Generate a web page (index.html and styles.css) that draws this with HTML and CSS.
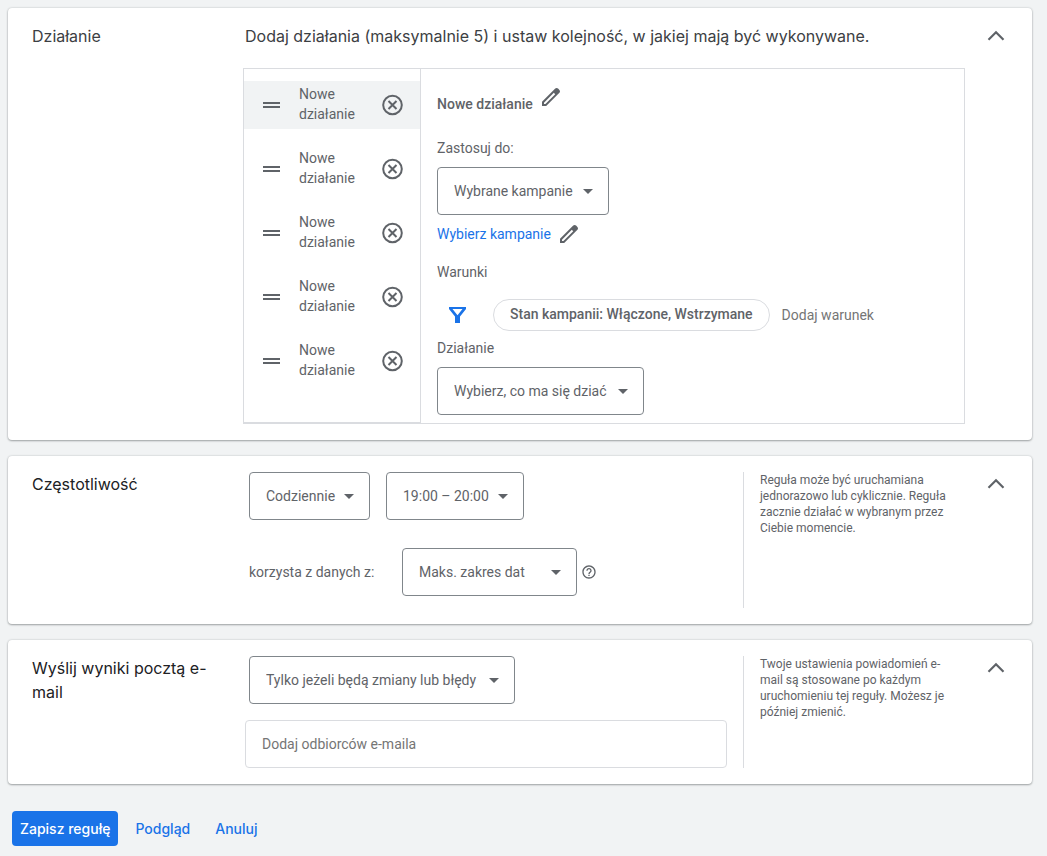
FILE: index.html
```html
<!DOCTYPE html>
<html lang="pl">
<head>
<meta charset="utf-8">
<meta name="viewport" content="width=device-width, initial-scale=1">
<title>Reguła automatyczna</title>
<link rel="stylesheet" href="styles.css">
</head>
<body>
<svg class="sprite" aria-hidden="true">
  <symbol id="chevron" viewBox="0 0 24 24"><path d="M4.500 15.800L12 8.300l7.500 7.500" fill="none" stroke="currentColor" stroke-width="2.200"/></symbol>
  <symbol id="handle" viewBox="0 0 24 24"><path d="M4 9h17v2H4zM4 13h17v2H4z" fill="currentColor"/></symbol>
  <symbol id="remove" viewBox="0 0 24 24"><circle cx="11.500" cy="12" r="9.300" fill="none" stroke="currentColor" stroke-width="2"/><path d="M7.500 8l8 8M15.500 8l-8 8" stroke="currentColor" stroke-width="2"/></symbol>
  <symbol id="pencil" viewBox="0 0 24 24"><path fill-rule="evenodd" d="M20.410 4.940l-1.350-1.350c-.780-.780-2.050-.780-2.830 0L3 16.820V21h4.180L20.410 7.770c.790-.780.790-2.050 0-2.830zM6.410 19.060L5 19v-1.360l9.820-9.820 1.410 1.410z" fill="currentColor"/></symbol>
  <symbol id="filter" viewBox="0 0 24 24"><path fill-rule="evenodd" d="M4 4h17v2l-6 7.500V20h-5v-6.500L4 6zM7.500 6l5 6.200L17.500 6z" fill="currentColor"/></symbol>
  <symbol id="arrow" viewBox="0 0 10 5"><path d="M0 0h10L5 5z" fill="currentColor"/></symbol>
  <symbol id="help" viewBox="0 0 24 24"><path d="M11 18h2v-2h-2v2zm1-16C6.480 2 2 6.480 2 12s4.480 10 10 10 10-4.480 10-10S17.520 2 12 2zm0 18c-4.410 0-8-3.590-8-8s3.590-8 8-8 8 3.590 8 8-3.590 8-8 8zm0-14c-2.210 0-4 1.790-4 4h2c0-1.100.900-2 2-2s2 .900 2 2c0 2-3 1.750-3 5h2c0-2.250 3-2.500 3-5 0-2.210-1.790-4-4-4z" fill="currentColor"/></symbol>
</svg>
<form class="page">
  <section class="card">
    <h2 class="card-title soft">Działanie</h2>
    <div class="card-body">
      <h3 class="heading">Dodaj działania (maksymalnie 5) i ustaw kolejność, w jakiej mają być wykonywane.</h3>
      <div class="editor">
        <ul class="steps">
          <li class="step active"><svg class="icon"><use href="#handle"/></svg><span class="step-name">Nowe działanie</span><button type="button" class="icon-button" aria-label="Usuń działanie 1"><svg class="icon"><use href="#remove"/></svg></button></li>
          <li class="step"><svg class="icon"><use href="#handle"/></svg><span class="step-name">Nowe działanie</span><button type="button" class="icon-button" aria-label="Usuń działanie 2"><svg class="icon"><use href="#remove"/></svg></button></li>
          <li class="step"><svg class="icon"><use href="#handle"/></svg><span class="step-name">Nowe działanie</span><button type="button" class="icon-button" aria-label="Usuń działanie 3"><svg class="icon"><use href="#remove"/></svg></button></li>
          <li class="step"><svg class="icon"><use href="#handle"/></svg><span class="step-name">Nowe działanie</span><button type="button" class="icon-button" aria-label="Usuń działanie 4"><svg class="icon"><use href="#remove"/></svg></button></li>
          <li class="step"><svg class="icon"><use href="#handle"/></svg><span class="step-name">Nowe działanie</span><button type="button" class="icon-button" aria-label="Usuń działanie 5"><svg class="icon"><use href="#remove"/></svg></button></li>
        </ul>
        <div class="details">
          <div class="name-row"><strong class="name">Nowe działanie</strong><button type="button" class="icon-button" aria-label="Zmień nazwę"><svg class="icon"><use href="#pencil"/></svg></button></div>
          <label class="label" for="scope">Zastosuj do:</label>
          <div class="select w-scope"><select id="scope"><option>Wybrane kampanie</option></select><svg class="arrow"><use href="#arrow"/></svg></div>
          <div class="link-row"><a class="link" href="#kampanie">Wybierz kampanie</a><button type="button" class="icon-button" aria-label="Edytuj kampanie"><svg class="icon"><use href="#pencil"/></svg></button></div>
          <p class="label">Warunki</p>
          <div class="filters">
            <svg class="icon filter"><use href="#filter"/></svg>
            <button type="button" class="chip">Stan kampanii: Włączone, Wstrzymane</button>
            <input class="add" type="text" placeholder="Dodaj warunek" aria-label="Dodaj warunek">
          </div>
          <label class="label" for="action">Działanie</label>
          <div class="select w-action"><select id="action"><option>Wybierz, co ma się dziać</option></select><svg class="arrow"><use href="#arrow"/></svg></div>
        </div>
      </div>
    </div>
    <button type="button" class="icon-button toggle" aria-label="Zwiń"><svg class="icon"><use href="#chevron"/></svg></button>
  </section>

  <section class="card">
    <h2 class="card-title">Częstotliwość</h2>
    <div class="card-body split">
      <div class="fields">
        <div class="row">
          <div class="select w-freq"><select aria-label="Częstotliwość"><option>Codziennie</option></select><svg class="arrow"><use href="#arrow"/></svg></div>
          <div class="select w-hours"><select aria-label="Godziny"><option>19:00 – 20:00</option></select><svg class="arrow"><use href="#arrow"/></svg></div>
        </div>
        <div class="row range">
          <label class="range-label" for="range">korzysta z danych z:</label>
          <div class="select w-range"><select id="range"><option>Maks. zakres dat</option></select><svg class="arrow"><use href="#arrow"/></svg></div>
          <button type="button" class="icon-button" aria-label="Pomoc"><svg class="icon-small"><use href="#help"/></svg></button>
        </div>
      </div>
      <p class="help">Reguła może być uruchamiana jednorazowo lub cyklicznie. Reguła zacznie działać w wybranym przez Ciebie momencie.</p>
    </div>
    <button type="button" class="icon-button toggle" aria-label="Zwiń"><svg class="icon"><use href="#chevron"/></svg></button>
  </section>

  <section class="card">
    <h2 class="card-title">Wyślij wyniki pocztą e-mail</h2>
    <div class="card-body split">
      <div class="fields">
        <div class="row">
          <div class="select w-notify"><select aria-label="Kiedy wysyłać"><option>Tylko jeżeli będą zmiany lub błędy</option></select><svg class="arrow"><use href="#arrow"/></svg></div>
        </div>
        <input class="email" type="text" placeholder="Dodaj odbiorców e-maila" aria-label="Dodaj odbiorców e-maila">
      </div>
      <p class="help">Twoje ustawienia powiadomień e-mail są stosowane po każdym uruchomieniu tej reguły. Możesz je później zmienić.</p>
    </div>
    <button type="button" class="icon-button toggle" aria-label="Zwiń"><svg class="icon"><use href="#chevron"/></svg></button>
  </section>

  <footer class="actions">
    <button type="button" class="button primary">Zapisz regułę</button>
    <button type="button" class="button">Podgląd</button>
    <button type="button" class="button">Anuluj</button>
  </footer>
</form>
</body>
</html>
```
FILE: styles.css
```css
* { box-sizing: border-box; }

body {
  margin: 0;
  background: #f1f3f4;
  color: #5f6368;
  font: 14px/20px Roboto, sans-serif;
}

h2, h3, p, ul { margin: 0; padding: 0; list-style: none; }

button, input, select { font: inherit; color: inherit; }

.sprite { display: none; }

.page {
  display: flex;
  flex-direction: column;
  gap: 16px;
  padding: 8px 15px 8px 8px;
}

.card {
  display: grid;
  grid-template-columns: 180px minmax(0, 1fr) 24px;
  padding: 16px 24px;
  background: #fff;
  border-radius: 4px;
  box-shadow: 0 1px 2px rgba(60, 64, 67, .4), 0 0 2px rgba(60, 64, 67, .25);
}

.card-title, .heading {
  font: 400 16px/24px Inter, sans-serif;
  color: #202124;
}

.card-title.soft, .heading { color: #3c4043; }

.card-body { margin: 0 19px 0 31px; }

.heading { padding-left: 2px; }

.icon { display: block; flex: none; width: 24px; height: 24px; }
.icon-small { display: block; width: 16px; height: 16px; }

.icon-button {
  display: block;
  flex: none;
  padding: 0;
  border: 0;
  background: none;
  cursor: pointer;
}

.toggle { align-self: start; }

.editor {
  display: grid;
  grid-template-columns: 177px minmax(0, 1fr);
  margin-top: 20px;
  border: 1px solid #dadce0;
}

.steps {
  display: flex;
  flex-direction: column;
  gap: 16px;
  padding: 12px 0;
  border-right: 1px solid #dadce0;
  border-bottom: 1px solid #dadce0;
}

.step {
  display: flex;
  align-items: center;
  height: 48px;
  padding: 0 15px;
}

.step.active { background: #f1f3f4; }
.step-name { flex: 1; margin-left: 16px; padding: 0 16px 2px 0; }

.details { padding: 16px 16px 8px; }

.name-row, .link-row { display: flex; align-items: center; gap: 6px; }
.name-row { height: 36px; align-items: flex-start; }
.name { font-weight: 500; padding-top: 9px; }

.label { display: block; }
.name-row + .label { margin-top: 17px; }

.select { display: grid; align-items: center; margin-top: 9px; max-width: 100%; }
.row .select { margin-top: 0; }

.select select, .select .arrow { grid-area: 1 / 1; }

.select select {
  appearance: none;
  width: 100%;
  height: 48px;
  padding: 0 32px 0 16px;
  border: 1px solid #80868b;
  border-radius: 4px;
  background: #fff;
}

.arrow {
  justify-self: end;
  width: 10px;
  height: 5px;
  margin-right: 16px;
  pointer-events: none;
}

.w-scope { width: 172px; }
.w-action { width: 207px; }
.w-freq { width: 121px; }
.w-hours { width: 138px; }
.w-range { width: 175px; }
.w-notify { width: 266px; }

.link-row { height: 38px; margin-bottom: 9px; }
.link { color: #1a73e8; text-decoration: none; }

.filters { display: flex; align-items: center; height: 32px; margin: 17px 0 7px; }
.filter { margin: 0 24px 0 8px; color: #1a73e8; }

.chip {
  flex: none;
  height: 32px;
  padding: 0 16px 2px;
  border: 1px solid #dadce0;
  border-radius: 16px;
  background: #fff;
  font-weight: 500;
}

.add { flex: 1; min-width: 0; margin-left: 12px; padding: 0; border: 0; }
.add::placeholder, .email::placeholder { color: #757575; opacity: 1; }

.split { display: flex; }
.fields { flex: 1; min-width: 0; padding: 0 16px 0 2px; }
.row { display: flex; align-items: center; gap: 16px; padding-left: 4px; }
.range { gap: 4px; margin: 28px 0 12px; }
.range-label { width: 149px; }

.help {
  flex: none;
  width: 222px;
  padding: 0 8px 0 16px;
  border-left: 1px solid #dadce0;
  font-size: 12px;
  line-height: 16px;
}

.email {
  display: block;
  width: 100%;
  height: 48px;
  margin-top: 16px;
  padding: 0 16px;
  border: 1px solid #dadce0;
  border-radius: 4px;
}

.actions { display: flex; gap: 9px; padding: 11px 4px; }

.button {
  height: 35px;
  padding: 0 8px;
  border: 0;
  border-radius: 4px;
  background: none;
  color: #1a73e8;
  font: 500 14px/20px Inter, sans-serif;
  cursor: pointer;
}

.primary { background: #1a73e8; color: #fff; }
```
